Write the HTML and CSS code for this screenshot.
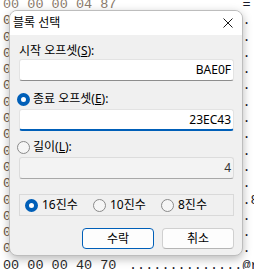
FILE: index.html
```html
<!DOCTYPE html>
<html lang="ko">
<head>
<meta charset="utf-8">
<title>블록 선택</title>
<link rel="stylesheet" href="styles.css">
</head>
<body>
<div class="hex">
  <div class="row top"><span class="hx">00 00 00 04 87</span><span class="asc">              =</span></div>
  <div class="row"><span class="hx">00 00 00 00 00</span><span class="asc">...............</span></div>
  <div class="row"><span class="hx">00 00 00 00 00</span><span class="asc">...............</span></div>
  <div class="row"><span class="hx">00 00 00 00 00</span><span class="asc">...............</span></div>
  <div class="row"><span class="hx">00 00 00 00 00</span><span class="asc">...............</span></div>
  <div class="row"><span class="hx">00 00 00 00 00</span><span class="asc">...............</span></div>
  <div class="row"><span class="hx">00 00 00 00 00</span><span class="asc">...............</span></div>
  <div class="row"><span class="hx">00 00 00 00 00</span><span class="asc">...............</span></div>
  <div class="row"><span class="hx">00 00 00 00 00</span><span class="asc">...............</span></div>
  <div class="row"><span class="hx">00 00 00 00 00</span><span class="asc">...............</span></div>
  <div class="row"><span class="hx">00 00 00 00 00</span><span class="asc">...............</span></div>
  <div class="row"><span class="hx">00 00 00 00 00</span><span class="asc">...............</span></div>
  <div class="row"><span class="hx">00 00 00 00 00</span><span class="asc">...............8</span></div>
  <div class="row"><span class="hx">00 00 00 00 00</span><span class="asc">...............</span></div>
  <div class="row"><span class="hx">00 00 00 00 00</span><span class="asc">...............</span></div>
  <div class="row"><span class="hx">00 00 00 00 00</span><span class="asc">...............</span></div>
  <div class="row bottom"><span class="hx">00 00 00 40 70</span><span class="asc">..............@r</span></div>
</div>

<div class="dialog">
  <div class="titlebar">
    <span class="title">블록 선택</span>
    <svg class="close" width="10" height="10" viewBox="0 0 10 10"><path d="M0.5 0.5 L9.5 9.5 M9.5 0.5 L0.5 9.5" stroke="#1a1a1a" stroke-width="1" fill="none"/></svg>
  </div>
  <div class="content">
    <div class="label">시작 오프셋(<u>S</u>):</div>
    <div class="input">BAE0F</div>
    <div class="label radio-row first"><span class="radio on"></span>종료 오프셋(<u>E</u>):</div>
    <div class="input focused">23EC43</div>
    <div class="label radio-row second"><span class="radio"></span>길이(<u>L</u>):</div>
    <div class="input disabled">4</div>
    <div class="group">
      <div class="opt"><span class="radio on"></span>16진수</div>
      <div class="opt"><span class="radio"></span>10진수</div>
      <div class="opt"><span class="radio"></span>8진수</div>
    </div>
    <div class="buttons">
      <div class="btn default">수락</div>
      <div class="btn">취소</div>
    </div>
  </div>
</div>
</body>
</html>
```

FILE: styles.css
```css
html, body {
  margin: 0;
  padding: 0;
}
body {
  width: 254px;
  height: 269px;
  overflow: hidden;
  background: #ffffff;
  position: relative;
}

.hex {
  font-family: "Liberation Mono", monospace;
  font-size: 13.5px;
  line-height: 16.3px;
  margin-top: -3px;
  color: #6e5a48;
}
.row {
  display: grid;
  grid-template-columns: 126px 1fr;
  padding-left: 3px;
  height: 16.3px;
  white-space: pre;
}
.row .asc {
  color: #1a1a2a;
}
.row.top .hx {
  color: #8a7a6c;
}
.row.bottom .hx {
  color: #2a2a2a;
}

.dialog {
  position: absolute;
  left: 9px;
  top: 10px;
  width: 234px;
  height: 246px;
  box-sizing: border-box;
  border: 1px solid #bdbdbd;
  border-radius: 8px;
  background: #f0f0f0;
  box-shadow: 0 3px 10px rgba(0, 0, 0, 0.28);
  overflow: hidden;
  font-family: "Noto Sans", "Noto Sans CJK KR", sans-serif;
  font-size: 12px;
  color: #000000;
}

.titlebar {
  height: 24px;
  background: #ffffff;
  display: flex;
  align-items: center;
  justify-content: space-between;
  padding: 0 9px 0 3px;
}
.title {
  line-height: 16px;
}
.close {
  display: block;
  margin-top: -1px;
}

.content {
  padding: 8px 8px 0 9px;
}

.label {
  height: 16px;
  line-height: 16px;
  display: flex;
  align-items: center;
  white-space: pre;
}
.label u {
  text-decoration: underline;
  text-underline-offset: 1px;
}
.radio-row.first {
  margin-top: 10px;
  margin-bottom: 2px;
}
.radio-row.second {
  margin-top: 8px;
  margin-bottom: 2px;
}
.radio-row .radio {
  margin-left: -2px;
  margin-right: 3px;
}

.radio {
  display: inline-block;
  width: 13px;
  height: 13px;
  box-sizing: border-box;
  border-radius: 50%;
  border: 1px solid #8a8a8a;
  background: #f6f6f6;
  flex: none;
}
.radio.on {
  border: 4px solid #005fb8;
  background: #ffffff;
}

.input {
  height: 22px;
  box-sizing: border-box;
  border: 1px solid #e3e3e3;
  border-bottom-color: #8d8d8d;
  border-radius: 3px;
  background: #ffffff;
  text-align: right;
  padding-right: 2px;
  line-height: 20px;
}
.input.focused {
  border-bottom: 2px solid #005fb8;
  line-height: 19px;
}
.input.disabled {
  background: #f3f3f3;
  border-color: #dcdcdc;
  border-bottom-color: #a8a8a8;
  color: #333333;
}

.group {
  margin-top: 15px;
  height: 22px;
  box-sizing: border-box;
  border: 1px solid #d9d9d9;
  display: grid;
  grid-template-columns: 68px 68px auto;
  align-items: center;
  padding-left: 5px;
}
.opt {
  display: flex;
  align-items: center;
  line-height: 16px;
}
.opt .radio {
  margin-right: 4px;
}

.buttons {
  margin-top: 12px;
  display: flex;
  justify-content: flex-end;
  gap: 8px;
}
.btn {
  width: 72px;
  height: 21px;
  box-sizing: border-box;
  border: 1px solid #d0d0d0;
  border-bottom-color: #b5b5b5;
  border-radius: 4px;
  background: #fdfdfd;
  text-align: center;
  line-height: 19px;
}
.btn.default {
  border: 1px solid #005fb8;
}
```
